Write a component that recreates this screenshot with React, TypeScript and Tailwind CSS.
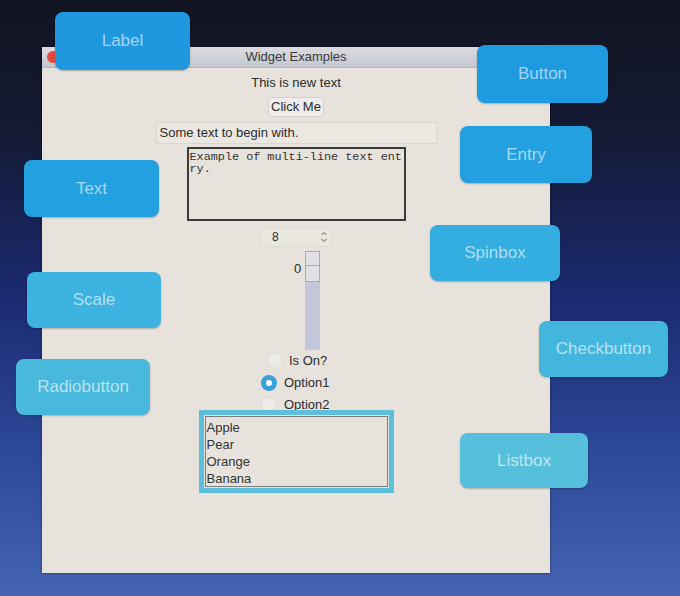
import React from "react";

const Badge = ({
  label,
  cls,
}: {
  label: string;
  cls: string;
}) => (
  <div
    className={
      "absolute flex items-center justify-center rounded-[8px] text-[17px] shadow-[0_1px_2px_rgba(0,0,0,0.25)] " +
      cls
    }
    style={{ fontFamily: '"Liberation Sans", Arial, sans-serif' }}
  >
    {label}
  </div>
);

export default function App() {
  const sans = { fontFamily: '"Liberation Sans", Arial, sans-serif' };
  return (
    <div
      className="relative w-[680px] h-[596px] overflow-hidden bg-[linear-gradient(180deg,#111420_0%,#141a33_22%,#1b2a72_50%,#2e4b9c_78%,#4464b0_100%)] pt-[47px] pl-[42px]"
      style={sans}
    >
      {/* Window */}
      <div className="w-[508px] h-[526px] bg-[#e7e3dc] flex flex-col shadow-[0_0_3px_rgba(0,0,0,0.4)]">
        {/* Title bar */}
        <div className="relative h-[21px] flex items-center justify-center bg-[linear-gradient(180deg,#dcdce0_0%,#c4c7d2_100%)] border-b border-[#b4b6be]">
          <div className="absolute left-[5px] top-[4px] w-3 h-3 rounded-full bg-[#e5483c]" />
          <span className="text-[13px] text-[#3a3a3a]">Widget Examples</span>
        </div>
        {/* Body */}
        <div className="flex flex-col items-center text-[#2b2b2b]">
          <div className="mt-[7px] h-4 leading-4 text-[13px]">This is new text</div>
          <div className="mt-[6px] h-5 w-[56px] flex items-center justify-center text-[13px] rounded-[4px] bg-[#efede9] border border-[#d6d3ce]">
            Click Me
          </div>
          <div className="mt-[5px] h-[22px] w-[281px] flex items-center pl-[3px] text-[13px] bg-[#ebe8e2] border border-[#d9d6d0]">
            Some text to begin with.
          </div>
          <div
            className="mt-[3px] h-[74px] w-[219px] border-2 border-[#3a3a3a] pl-[1px] pt-[2px] text-[11.8px] leading-[12px] text-[#333] whitespace-pre overflow-hidden"
            style={{ fontFamily: '"Liberation Mono", "DejaVu Sans Mono", monospace' }}
          >
            {"Example of multi-line text ent\nry."}
          </div>
          {/* Spinbox */}
          <div className="mt-[6px] h-5 w-[72px] flex items-center justify-between text-[12px] bg-[#e9e6e0] border border-[#dedbd5]">
            <span className="ml-[11px]">8</span>
            <svg width="8" height="14" viewBox="0 0 8 14" className="mr-[3px]">
              <path d="M1.5 5 L4 2.5 L6.5 5" fill="none" stroke="#666" strokeWidth="1" />
              <path d="M1.5 9 L4 11.5 L6.5 9" fill="none" stroke="#666" strokeWidth="1" />
            </svg>
          </div>
          {/* Scale */}
          <div className="mt-[4px] w-full pl-[252px] flex h-[99px]">
            <div className="w-[10px] mt-[10px] text-[13px] leading-4">0</div>
            <div className="ml-[1px] w-[15px] h-full bg-[#c3c7d9] flex flex-col">
              <div className="h-[31px] bg-[#e2e2e6] border border-[#a9abb5] flex flex-col">
                <div className="h-[14px] border-b border-[#a9abb5]" />
              </div>
            </div>
          </div>
          {/* Checkbutton */}
          <div className="mt-[3px] w-full pl-[225px] h-4 flex items-center text-[13px]">
            <div className="w-4 h-4 rounded-full bg-[#edebe8] border border-[#e0ddd8]" />
            <span className="ml-[6px]">Is On?</span>
          </div>
          {/* Radio 1 */}
          <div className="mt-[6px] w-full pl-[219px] h-4 flex items-center text-[13px]">
            <div className="w-4 h-4 rounded-full bg-[#3aa2db] flex items-center justify-center">
              <div className="w-[6px] h-[6px] rounded-full bg-white" />
            </div>
            <span className="ml-[7px]">Option1</span>
          </div>
          {/* Radio 2 */}
          <div className="mt-[6px] w-full pl-[219px] h-4 flex items-center text-[13px]">
            <div className="w-4 h-4 rounded-full bg-[#edebe8] border border-[#e0ddd8]" />
            <span className="ml-[7px]">Option2</span>
          </div>
          {/* Listbox */}
          <div className="relative -mt-[3px] h-[83px] w-[195px] border-[5px] border-[#5cbfdc] p-[1px]">
            <div className="h-full border border-[#7d7d7d] bg-[#e7e3dc] flex flex-col pt-[2px] pl-[1px] text-[13px] leading-[17px] text-[#333]">
              <span>Apple</span>
              <span>Pear</span>
              <span>Orange</span>
              <span>Banana</span>
            </div>
          </div>
        </div>
      </div>

      {/* Overlay badges */}
      <Badge label="Label" cls="left-[55px] top-[12px] w-[135px] h-[58px] bg-[#1f98e0] text-[#a3d4f0]" />
      <Badge label="Button" cls="left-[477px] top-[45px] w-[131px] h-[58px] bg-[#1e9ae0] text-[#a3d5f0]" />
      <Badge label="Entry" cls="left-[460px] top-[126px] w-[132px] h-[57px] bg-[#22a0e0] text-[#a8d8f0]" />
      <Badge label="Text" cls="left-[24px] top-[160px] w-[135px] h-[57px] bg-[#22a0df] text-[#a8d8f0]" />
      <Badge label="Spinbox" cls="left-[430px] top-[225px] w-[130px] h-[56px] bg-[#34ade0] text-[#b0ddef]" />
      <Badge label="Scale" cls="left-[27px] top-[272px] w-[134px] h-[56px] bg-[#3cb3e0] text-[#b4dfee]" />
      <Badge label="Checkbutton" cls="left-[539px] top-[321px] w-[129px] h-[56px] bg-[#43b6dd] text-[#b8e1ee]" />
      <Badge label="Radiobutton" cls="left-[16px] top-[359px] w-[134px] h-[56px] bg-[#48b8dc] text-[#bae2ee]" />
      <Badge label="Listbox" cls="left-[460px] top-[433px] w-[128px] h-[55px] bg-[#56bfdc] text-[#c0e5ee]" />
    </div>
  );
}
